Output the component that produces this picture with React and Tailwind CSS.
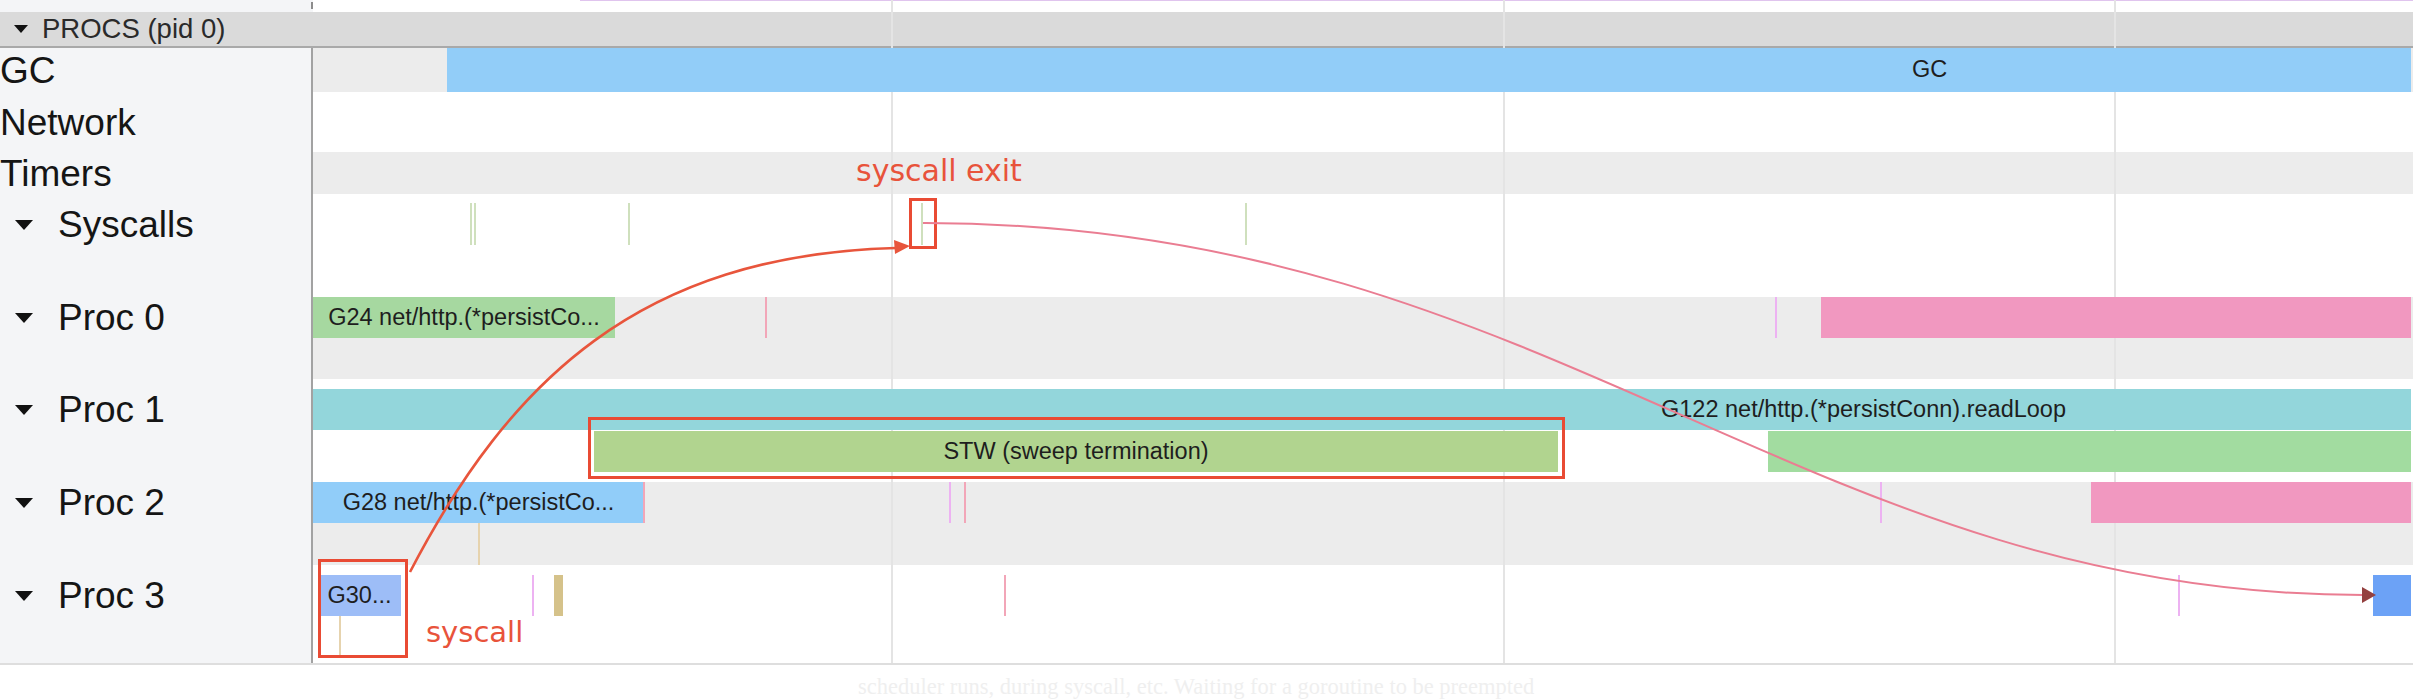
import React from "react";

const X0 = 315;

function Bar({ x1, x2, top, h = 41, cls, text, textLeft }) {
  return (
    <div
      className={`absolute z-[2] flex items-center overflow-hidden whitespace-nowrap text-[23.5px] leading-none text-[#1e1e1e] ${textLeft == null ? "justify-center" : ""} ${cls}`}
      style={{ left: x1 - X0, width: x2 - x1, top, height: h }}
    >
      {text ? (
        <span style={textLeft != null ? { marginLeft: textLeft - x1 } : undefined}>{text}</span>
      ) : null}
    </div>
  );
}

function Tick({ x, top, h = 41, cls, w = 2 }) {
  return (
    <div
      className={`absolute z-[2] ${cls}`}
      style={{ left: x - X0, top, height: h, width: w }}
    />
  );
}

function Tri({ w = 18, h = 10 }) {
  return (
    <svg width={w} height={h} viewBox={`0 0 ${w} ${h}`} className="shrink-0">
      <polygon points={`0,0 ${w},0 ${w / 2},${h}`} fill="#111" />
    </svg>
  );
}

function LabelCell({ children, expandable, pad = 0 }) {
  return (
    <div className="w-[313px] shrink-0 border-r-2 border-[#a2a2a2] bg-[#f4f5f7] text-[37px] leading-none text-[#151515]">
      {!expandable ? (
        <div className="flex h-full items-center">
          <span>{children}</span>
        </div>
      ) : (
        <div style={{ paddingTop: pad }}>
          <div className="flex h-[41px] items-center gap-[25px] pl-[15px]">
            <Tri />
            <span>{children}</span>
          </div>
        </div>
      )}
    </div>
  );
}

function Row({ h, label, expandable, pad, trackCls, children }) {
  return (
    <div className="flex" style={{ height: h }}>
      <LabelCell expandable={expandable} pad={pad}>
        {label}
      </LabelCell>
      <div className={`relative flex-1 ${trackCls}`}>{children}</div>
    </div>
  );
}

export default function App() {
  const violet = "bg-[#edb2f2]";
  const pink = "bg-[#f2a6b8]";
  const tan = "bg-[#e6d3ae]";
  const syscallTick = "bg-[#cfe0bd]";

  return (
    <div className="relative h-[700px] w-[2413px] overflow-hidden bg-white font-['Liberation_Sans',Arial,sans-serif]">
      {/* top strip */}
      <div className="flex h-[12px]">
        <div className="flex w-[313px] shrink-0 justify-end bg-[#f4f5f7] pt-[2px]">
          <div className="h-[7px] w-[2px] bg-[#8c8c8c]" />
        </div>
        <div className="flex flex-1 items-start bg-white pl-[267px]">
          <div className="h-px flex-1 bg-[#e0c4ee]" />
        </div>
      </div>

      {/* header */}
      <div className="flex h-[36px] items-center gap-[14px] border-b-2 border-[#a9a9a9] bg-[#dadada] pl-[14px]">
        <Tri w={14} h={8} />
        <span className="text-[27.5px] leading-none text-[#2a2a2a]">PROCS (pid 0)</span>
      </div>

      {/* GC */}
      <Row h={44} label="GC" trackCls="bg-[#ececec]">
        <Bar x1={449} x2={2413} top={0} h={44} cls="bg-[#92cdf8]" text="GC" textLeft={1914} />
      </Row>

      {/* Network */}
      <Row h={60} label="Network" trackCls="bg-white" />

      {/* Timers */}
      <Row h={42} label="Timers" trackCls="bg-[#ececec]" />

      {/* Syscalls */}
      <Row h={103} label="Syscalls" expandable pad={10} trackCls="bg-white">
        <Tick x={472} top={9} h={42} cls={syscallTick} />
        <Tick x={476} top={9} h={42} cls={syscallTick} />
        <Tick x={630} top={9} h={42} cls={syscallTick} />
        <Tick x={923} top={9} h={42} cls={syscallTick} />
        <Tick x={1247} top={9} h={42} cls={syscallTick} />
      </Row>

      {/* Proc 0 */}
      <Row h={82} label="Proc 0" expandable pad={0} trackCls="bg-[#ececec]">
        <Bar x1={315} x2={617} top={0} cls="bg-[#a6d8a0]" text="G24 net/http.(*persistCo..." />
        <Tick x={767} top={0} cls={pink} />
        <Tick x={1777} top={0} cls={violet} />
        <Bar x1={1823} x2={2413} top={0} cls="bg-[#f198c0]" />
      </Row>

      {/* Proc 1 */}
      <Row h={103} label="Proc 1" expandable pad={10} trackCls="bg-white">
        <Bar x1={315} x2={2413} top={10} cls="bg-[#93d6db]" text="G122 net/http.(*persistConn).readLoop" textLeft={1663} />
        <Bar x1={596} x2={1560} top={52} cls="bg-[#b1d48f]" text="STW (sweep termination)" />
        <Bar x1={1770} x2={2413} top={52} cls="bg-[#a2dca0]" />
      </Row>

      {/* Proc 2 */}
      <Row h={83} label="Proc 2" expandable pad={0} trackCls="bg-[#ececec]">
        <Bar x1={315} x2={646} top={0} cls="bg-[#91cdf9]" text="G28 net/http.(*persistCo..." />
        <Tick x={645} top={0} cls={pink} w={2} />
        <Tick x={951} top={0} cls={violet} />
        <Tick x={966} top={0} cls={pink} />
        <Tick x={1882} top={0} cls={violet} />
        <Tick x={480} top={41} h={42} cls={tan} />
        <Bar x1={2093} x2={2413} top={0} cls="bg-[#f198c0]" />
      </Row>

      {/* Proc 3 */}
      <Row h={98} label="Proc 3" expandable pad={10} trackCls="bg-white">
        <Bar x1={320} x2={403} top={10} cls="bg-[#9dbdf7]" text="G30..." />
        <Tick x={341} top={51} h={42} cls={tan} />
        <Tick x={534} top={10} cls={violet} />
        <Tick x={556} top={10} w={9} cls="bg-[#d5c28a]" />
        <Tick x={1006} top={10} cls={pink} />
        <Tick x={2180} top={10} cls={violet} />
        <Bar x1={2375} x2={2413} top={10} cls="bg-[#6ca2f6]" />
      </Row>

      {/* bottom border */}
      <div className="h-[2px] bg-[#dedede]" />

      {/* footer caption */}
      <div className="whitespace-nowrap pl-[858px] pt-[11px] font-['Liberation_Serif',serif] text-[22.5px] leading-none text-[#efefef]">
        scheduler runs, during syscall, etc. Waiting for a goroutine to be preempted
      </div>

      {/* grid lines */}
      <div className="absolute left-[891px] top-0 z-[1] h-[663px] w-[2px] bg-[#e4e4e4]" />
      <div className="absolute left-[1503px] top-0 z-[1] h-[663px] w-[2px] bg-[#e4e4e4]" />
      <div className="absolute left-[2114px] top-0 z-[1] h-[663px] w-[2px] bg-[#e4e4e4]" />

      {/* annotations */}
      <div className="absolute left-[909px] top-[198px] z-[30] h-[51px] w-[28px] border-[3px] border-[#e94b34]" />
      <div className="absolute left-[588px] top-[417px] z-[30] h-[62px] w-[977px] border-[3px] border-[#e94b34]" />
      <div className="absolute left-[318px] top-[559px] z-[30] h-[99px] w-[90px] border-[3px] border-[#e94b34]" />

      <div className="absolute left-[856px] top-[156px] z-[30] whitespace-nowrap font-['DejaVu_Sans',sans-serif] text-[30px] leading-none text-[#e8533b]">
        syscall exit
      </div>
      <div className="absolute left-[426px] top-[618px] z-[30] whitespace-nowrap font-['DejaVu_Sans',sans-serif] text-[29px] leading-none text-[#e8533b]">
        syscall
      </div>

      <svg
        className="pointer-events-none absolute left-0 top-0 z-[31]"
        width="2413"
        height="700"
        viewBox="0 0 2413 700"
      >
        <path
          d="M410,572 C510,380 640,255 896,248"
          fill="none"
          stroke="#e8553c"
          strokeWidth="2.6"
        />
        <polygon points="910,246 894,240 895,254" fill="#e8553c" />
        <path
          d="M923,223 C1550,222 1800,595 2363,595"
          fill="none"
          stroke="#ea7d92"
          strokeWidth="2"
        />
        <polygon points="2376,595 2362,587 2362,603" fill="#94403f" />
      </svg>
    </div>
  );
}
